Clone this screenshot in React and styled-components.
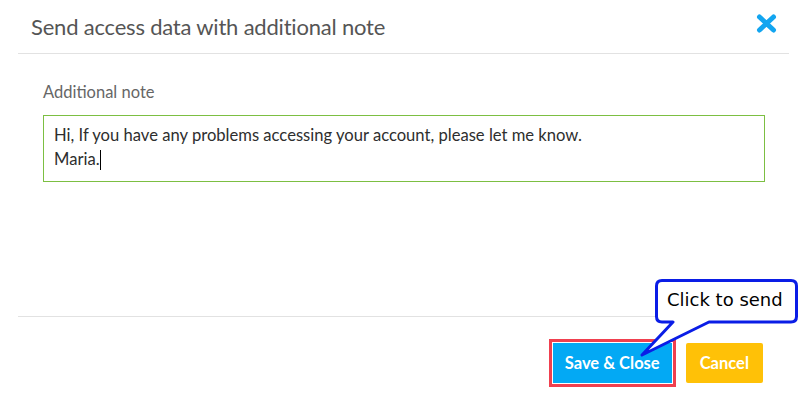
import React from 'react';
import styled, { createGlobalStyle } from 'styled-components';

const GlobalStyle = createGlobalStyle`
  html, body {
    margin: 0;
    padding: 0;
    background: #ffffff;
  }
  body {
    font-family: Lato, "Open Sans", sans-serif;
  }
`;

const Modal = styled.div`
  position: relative;
  width: 809px;
  height: 403px;
  background: #fff;
  display: flex;
  flex-direction: column;
`;

const Header = styled.div`
  height: 53px;
  margin: 0 20px 0 18px;
  padding: 0 12px 0 13px;
  border-bottom: 1px solid #e2e2e2;
  display: flex;
  align-items: center;
  justify-content: space-between;
`;

const Title = styled.h2`
  margin: 0;
  font-size: 22px;
  font-weight: 400;
  color: #555;
  letter-spacing: -0.2px;
`;

const CloseBtn = styled.button`
  border: 0;
  background: none;
  padding: 0;
  width: 21px;
  height: 19px;
  display: flex;
  cursor: pointer;
  margin-bottom: 6px;
`;

const Body = styled.div`
  flex: 1;
  margin: 0 20px 0 18px;
  padding: 28px 24px 0 25px;
  border-bottom: 1px solid #e2e2e2;
`;

const Label = styled.label`
  display: block;
  font-size: 16.5px;
  color: #666;
  margin-bottom: 13px;
`;

const NoteBox = styled.div`
  border: 1px solid #7cbf42;
  padding: 7px 10px;
  box-sizing: border-box;
  height: 67px;
  font-size: 16.6px;
  line-height: 24px;
  color: #2e2e2e;
`;

const Caret = styled.span`
  display: inline-block;
  width: 1px;
  height: 20px;
  background: #000;
  vertical-align: -5px;
`;

const Footer = styled.div`
  height: 86px;
  margin: 0 20px 0 18px;
  padding: 22px 26px 0 0;
  display: flex;
  justify-content: flex-end;
  align-items: flex-start;
  gap: 10px;
  box-sizing: border-box;
`;

const Highlight = styled.div`
  border: 3px solid #f0404f;
  padding: 1px;
  display: flex;
`;

const Button = styled.button`
  border: 0;
  height: 40px;
  padding: 0 ${p => p.$pad}px;
  background: ${p => p.$bg};
  color: #fff;
  font-family: Lato, "Open Sans", sans-serif;
  font-weight: 700;
  font-size: 16.5px;
  border-radius: ${p => p.$radius}px;
  cursor: pointer;
`;

const ButtonSlot = styled.div`
  padding-top: 4px;
`;

const Callout = styled.div`
  position: absolute;
  left: 640px;
  top: 277px;
  width: 160px;
  height: 82px;
`;

const CalloutText = styled.span`
  position: absolute;
  left: 27px;
  top: 12px;
  font-family: "DejaVu Sans", Verdana, sans-serif;
  font-size: 18px;
  color: #000;
  white-space: nowrap;
`;

function CloseIcon() {
  return (
    <svg width="21" height="19" viewBox="0 0 21 19">
      <path d="M3.5 3 L17.5 16 M17.5 3 L3.5 16" stroke="#12a5f0" strokeWidth="5" strokeLinecap="round" />
    </svg>
  );
}

export default function App() {
  return (
    <>
      <GlobalStyle />
      <Modal>
        <Header>
          <Title>Send access data with additional note</Title>
          <CloseBtn aria-label="close">
            <CloseIcon />
          </CloseBtn>
        </Header>
        <Body>
          <Label>Additional note</Label>
          <NoteBox>
            Hi, If you have any problems accessing your account, please let me know.
            <br />
            Maria.<Caret />
          </NoteBox>
        </Body>
        <Footer>
          <Highlight>
            <Button $bg="#03a9f4" $pad={12} $radius={0}>Save &amp; Close</Button>
          </Highlight>
          <ButtonSlot>
            <Button $bg="#ffc107" $pad={14} $radius={2}>Cancel</Button>
          </ButtonSlot>
        </Footer>
        <Callout>
          <svg width="160" height="82" viewBox="0 0 160 82">
            <path
              d="M22 3.5 H151 Q156.5 3.5 156.5 9 V39.5 Q156.5 45 151 45 H69 L2 78 L33 45 H22 Q16.5 45 16.5 39.5 V9 Q16.5 3.5 22 3.5 Z"
              fill="#fff"
              stroke="#0a1de6"
              strokeWidth="3"
              strokeLinejoin="round"
            />
          </svg>
          <CalloutText>Click to send</CalloutText>
        </Callout>
      </Modal>
    </>
  );
}
